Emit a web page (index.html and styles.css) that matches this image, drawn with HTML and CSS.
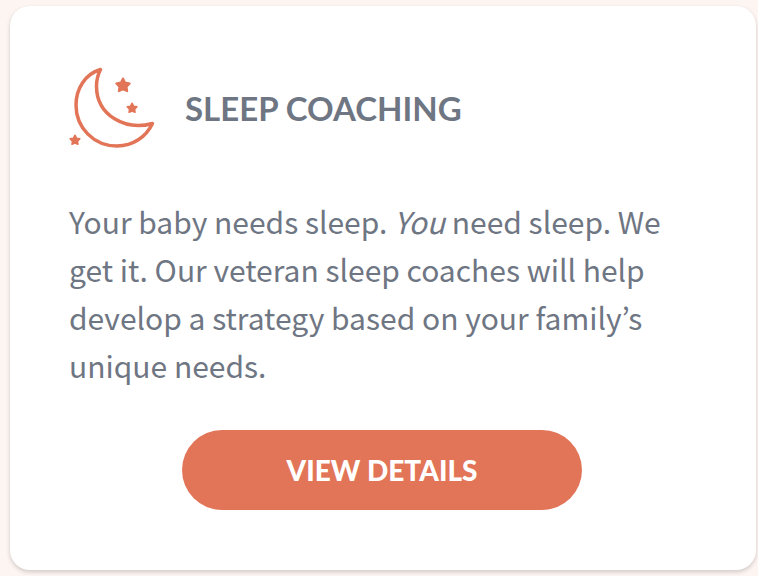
FILE: index.html
```html
<!DOCTYPE html>
<html lang="en">
<head>
<meta charset="utf-8">
<meta name="viewport" content="width=device-width, initial-scale=1">
<title>Sleep Coaching</title>
<link rel="stylesheet" href="styles.css">
</head>
<body>
<article class="card">
  <header class="card-header">
    <svg class="card-icon" viewBox="0 0 88 84" aria-hidden="true">
      <path class="moon" d="M31.500 3.500C16 8 7 23 7 39C7 62 25 80 48 80C64 80 77 71 83.500 57.500C57 65 27.500 50 27.500 20C27.500 14 28.500 9.500 31.500 3.500Z"/>
      <path class="star" id="star" d="M54 12.500L56.200 16.600L60.800 17.400L57.600 20.800L58.200 25.200L54 23.300L49.800 25.200L50.400 20.800L47.200 17.400L51.800 16.600Z"/>
      <use href="#star" transform="translate(24.200 28.200) scale(.72)"/>
      <use href="#star" transform="translate(-32.900 60.200) scale(.72)"/>
    </svg>
    <h2 class="card-title">SLEEP COACHING</h2>
  </header>
  <p class="card-text">Your baby needs sleep. <em>You</em> need sleep. We get it. Our veteran sleep coaches will help develop a strategy based on your family’s unique needs.</p>
  <a class="button" href="#details">VIEW DETAILS</a>
</article>
</body>
</html>
```
FILE: styles.css
```css
* {
  box-sizing: border-box;
}

body {
  margin: 0;
  padding: 6px 2px 6px 10px;
  background: #fdf5f2;
  color: #6f7683;
  font-family: "Noto Sans CJK KR", "Noto Sans", sans-serif;
}

.card {
  display: flex;
  flex-direction: column;
  padding: 60px 61px 60px 59px;
  border-radius: 20px;
  background: #fff;
  box-shadow: 0 2px 4px rgba(0, 0, 0, 0.18);
}

.card-header {
  display: flex;
  align-items: center;
  gap: 28px;
  margin-bottom: 47px;
}

.card-icon {
  flex: none;
  width: 88px;
  height: 84px;
}

.moon {
  fill: none;
  stroke: #e27457;
  stroke-width: 3.500;
  stroke-linejoin: round;
}

.star {
  fill: #e27457;
  stroke: #e27457;
  stroke-width: 2;
  stroke-linejoin: round;
}

.card-title {
  margin: 0;
  font: 700 33px/44px Lato, sans-serif;
}

.card-text {
  margin: 0 0 41px;
  font-size: 30px;
  line-height: 48px;
}

.button {
  align-self: center;
  width: 400px;
  max-width: 100%;
  border-radius: 40px;
  background: #e27457;
  color: #fff;
  font: 900 28px/80px Lato, sans-serif;
  text-align: center;
  text-decoration: none;
}
```
